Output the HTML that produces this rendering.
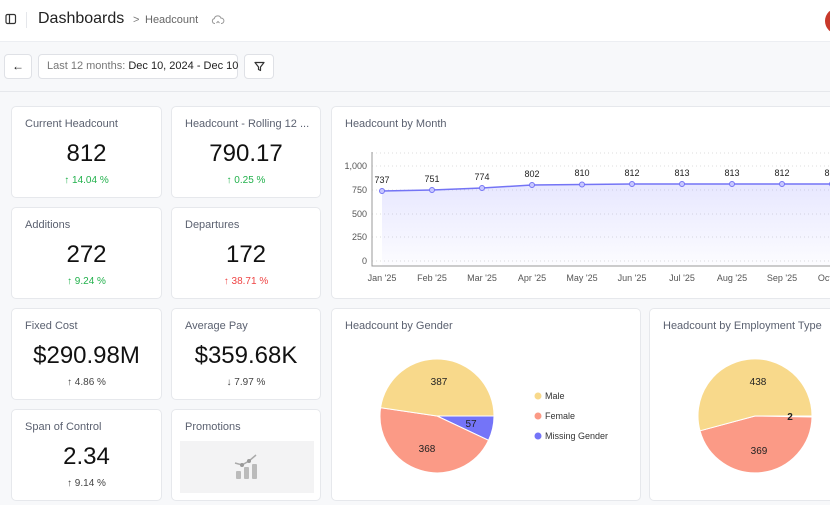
<!DOCTYPE html>
<html><head><style>
*{margin:0;padding:0;box-sizing:border-box}
body{width:830px;height:505px;overflow:hidden;background:#f7f8fa;font-family:"Liberation Sans",sans-serif;position:relative;color:#111}
.a{position:absolute}
.card{position:absolute;background:#fff;border:1px solid #e6e8ec;border-radius:5px}
.t{position:absolute;left:13px;top:11px;font-size:11px;color:#5b6170;white-space:nowrap}
.v{position:absolute;left:0;right:0;top:33px;text-align:center;font-size:24px;color:#111}
.p{position:absolute;left:0;right:0;top:68px;text-align:center;font-size:10px;color:#444}
.g{color:#22b14c}.r{color:#ef4444}
.btn{position:absolute;background:#fff;border:1px solid #dfe1e6;border-radius:4px;top:54px;height:25px}
</style></head><body>
<div class="a" style="left:0;top:0;width:830px;height:42px;background:#fff;border-bottom:1px solid #eceef2"></div>
<svg class="a" style="left:5px;top:13px" width="12" height="12" viewBox="0 0 12 12"><rect x="1" y="1.5" width="9.5" height="9" rx="1.5" fill="none" stroke="#333" stroke-width="1.2"/><line x1="4.5" y1="1.5" x2="4.5" y2="10.5" stroke="#333" stroke-width="1.2"/></svg>
<div class="a" style="left:26px;top:12px;width:1px;height:16px;background:#e5e7eb"></div>
<div class="a" style="left:38px;top:10px;font-size:16px;color:#222">Dashboards</div>
<div class="a" style="left:133px;top:14px;font-size:11px;color:#777">&gt;</div>
<div class="a" style="left:145px;top:14px;font-size:11px;color:#666">Headcount</div>
<svg class="a" style="left:211px;top:14px" width="14" height="12" viewBox="0 0 14 12"><path d="M4 9.5H3.5A2.5 2.5 0 0 1 3.3 4.6 3.5 3.5 0 0 1 10 4.2 2.5 2.5 0 0 1 10.5 9.5H10M5.5 9l1.5-1.5L8.5 9" fill="none" stroke="#999" stroke-width="1"/></svg>
<div class="a" style="left:825px;top:8px;width:26px;height:26px;border-radius:50%;background:#c8392b"></div>
<div class="a" style="left:0;top:91px;width:830px;height:1px;background:#e6e8ec"></div>
<div class="btn" style="left:4px;width:28px;text-align:center;font-size:12px;line-height:23px">&#8592;</div>
<div class="btn" style="left:38px;width:200px;font-size:11px;line-height:23px;padding-left:8px;color:#777;white-space:nowrap">Last 12 months: <span style="color:#222">Dec 10, 2024 - Dec 10</span></div>
<div class="btn" style="left:244px;width:30px"><svg style="position:absolute;left:9px;top:6px" width="11" height="11" viewBox="0 0 11 11"><path d="M1 1.5h9L6.5 6v3.5L4.5 8.5V6z" fill="none" stroke="#333" stroke-width="1.2" stroke-linejoin="round"/></svg></div>

<div class="card" style="left:11px;top:106px;width:151px;height:92px"><div class="t">Current Headcount</div><div class="v">812</div><div class="p g">↑ 14.04 %</div></div>
<div class="card" style="left:171px;top:106px;width:150px;height:92px"><div class="t">Headcount - Rolling 12 ...</div><div class="v">790.17</div><div class="p g">↑ 0.25 %</div></div>
<div class="card" style="left:11px;top:207px;width:151px;height:92px"><div class="t">Additions</div><div class="v">272</div><div class="p g">↑ 9.24 %</div></div>
<div class="card" style="left:171px;top:207px;width:150px;height:92px"><div class="t">Departures</div><div class="v">172</div><div class="p r">↑ 38.71 %</div></div>
<div class="card" style="left:11px;top:308px;width:151px;height:92px"><div class="t">Fixed Cost</div><div class="v">$290.98M</div><div class="p">↑ 4.86 %</div></div>
<div class="card" style="left:171px;top:308px;width:150px;height:92px"><div class="t">Average Pay</div><div class="v">$359.68K</div><div class="p">↓ 7.97 %</div></div>
<div class="card" style="left:11px;top:409px;width:151px;height:92px"><div class="t">Span of Control</div><div class="v">2.34</div><div class="p">↑ 9.14 %</div></div>
<div class="card" style="left:171px;top:409px;width:150px;height:92px"><div class="t">Promotions</div>
<div class="a" style="left:8px;top:31px;width:134px;height:52px;background:#f3f3f4"><svg style="position:absolute;left:53px;top:12px" width="30" height="28" viewBox="0 0 30 28"><rect x="3" y="18" width="5" height="8" rx="1" fill="#bbb"/><rect x="11" y="14" width="5" height="12" rx="1" fill="#bbb"/><rect x="19" y="11" width="5" height="15" rx="1" fill="#bbb"/><path d="M2 10l7 2 7-4 7-6" fill="none" stroke="#aaa" stroke-width="1.5"/><circle cx="9" cy="12" r="2" fill="#999"/><circle cx="16" cy="8" r="2" fill="#999"/></svg></div></div>

<div class="card" style="left:331px;top:106px;width:520px;height:193px"><div class="t">Headcount by Month</div></div>
<svg class="a" style="left:331px;top:106px" width="499" height="193" viewBox="331 106 499 193" font-family="Liberation Sans" font-size="9">
<defs><linearGradient id="gr" x1="0" y1="0" x2="0" y2="1"><stop offset="0" stop-color="#7b7bff" stop-opacity=".18"/><stop offset="1" stop-color="#7b7bff" stop-opacity=".02"/></linearGradient></defs>
<g stroke="#ddd" stroke-dasharray="1 3"><line x1="372" y1="153" x2="830" y2="153"/><line x1="372" y1="166" x2="830" y2="166"/><line x1="372" y1="190" x2="830" y2="190"/><line x1="372" y1="214" x2="830" y2="214"/><line x1="372" y1="237" x2="830" y2="237"/><line x1="372" y1="261" x2="830" y2="261"/></g>
<path d="M382 191L432 190L482 188L532 185L582 184.5L632 184L682 184L732 184L782 184L832 184V266H382Z" fill="url(#gr)"/>
<path d="M382 191L432 190L482 188L532 185L582 184.5L632 184L682 184L732 184L782 184L832 184" fill="none" stroke="#7474f5" stroke-width="1.5"/>
<g fill="#c8c8ff" stroke="#7474f5"><circle cx="382" cy="191" r="2.5"/><circle cx="432" cy="190" r="2.5"/><circle cx="482" cy="188" r="2.5"/><circle cx="532" cy="185" r="2.5"/><circle cx="582" cy="184.5" r="2.5"/><circle cx="632" cy="184" r="2.5"/><circle cx="682" cy="184" r="2.5"/><circle cx="732" cy="184" r="2.5"/><circle cx="782" cy="184" r="2.5"/><circle cx="832" cy="184" r="2.5"/></g>
<path d="M372 152V266H830" fill="none" stroke="#999"/>
<g fill="#555" text-anchor="end"><text x="367" y="169">1,000</text><text x="367" y="193">750</text><text x="367" y="217">500</text><text x="367" y="240">250</text><text x="367" y="264">0</text></g>
<g fill="#222" text-anchor="middle"><text x="382" y="183">737</text><text x="432" y="182">751</text><text x="482" y="180">774</text><text x="532" y="177">802</text><text x="582" y="176">810</text><text x="632" y="176">812</text><text x="682" y="176">813</text><text x="732" y="176">813</text><text x="782" y="176">812</text><text x="832" y="176">812</text></g>
<g fill="#555" text-anchor="middle"><text x="382" y="281">Jan '25</text><text x="432" y="281">Feb '25</text><text x="482" y="281">Mar '25</text><text x="532" y="281">Apr '25</text><text x="582" y="281">May '25</text><text x="632" y="281">Jun '25</text><text x="682" y="281">Jul '25</text><text x="732" y="281">Aug '25</text><text x="782" y="281">Sep '25</text><text x="832" y="281">Oct '25</text></g>
</svg>

<div class="card" style="left:331px;top:308px;width:310px;height:193px"><div class="t">Headcount by Gender</div></div>
<div class="card" style="left:649px;top:308px;width:200px;height:193px"><div class="t">Headcount by Employment Type</div></div>
<svg class="a" style="left:0;top:0" width="830" height="505" font-family="Liberation Sans" font-size="10">
<g stroke="#fff" stroke-width="1">
<path d="M437 416L494 416A57 57 0 0 1 488.5 440.3Z" fill="#7474f8"/>
<path d="M437 416L488.5 440.3A57 57 0 0 1 380.6 407.7Z" fill="#fb9a86"/>
<path d="M437 416L380.6 407.7A57 57 0 0 1 494 416Z" fill="#f8d98b"/>
<path d="M755 416L812 416A57 57 0 0 1 812 417Z" fill="#eee"/>
<path d="M755 416L812 417A57 57 0 0 1 700 430.8Z" fill="#fb9a86"/>
<path d="M755 416L700 430.8A57 57 0 1 1 812 416Z" fill="#f8d98b"/>
</g>
<g fill="#222" text-anchor="middle"><text x="439" y="385">387</text><text x="427" y="452">368</text><text x="471" y="427">57</text><text x="758" y="385">438</text><text x="759" y="454">369</text><text x="790" y="420" font-weight="bold">2</text></g>
<circle cx="538" cy="396" r="3.5" fill="#f8d98b"/><circle cx="538" cy="416" r="3.5" fill="#fb9a86"/><circle cx="538" cy="436" r="3.5" fill="#7474f8"/>
<g fill="#333" font-size="9"><text x="545" y="399">Male</text><text x="545" y="419">Female</text><text x="545" y="439">Missing Gender</text></g>
</svg>
</body></html>
